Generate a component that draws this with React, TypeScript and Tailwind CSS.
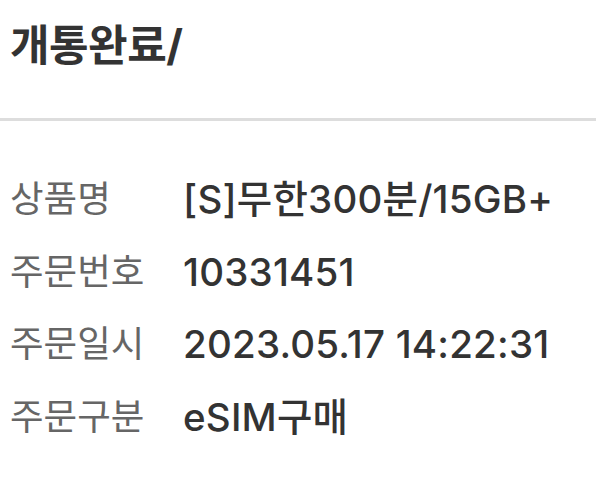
import React from "react";

const rows: [string, string][] = [
  ["상품명", "[S]무한300분/15GB+"],
  ["주문번호", "10331451"],
  ["주문일시", "2023.05.17 14:22:31"],
  ["주문구분", "eSIM구매"],
];

export default function App() {
  return (
    <div
      className="w-[596px] h-[499px] bg-white overflow-hidden"
      style={{ fontFamily: 'Inter, "Noto Sans CJK KR", sans-serif' }}
    >
      <div className="h-[118px] pt-[21px] px-[10px]">
        <div className="text-[43px] leading-[48px] font-bold text-[#333333] tracking-[-0.5px]">
          개통완료/
        </div>
      </div>
      <div className="h-[3px] bg-[#dddddd]" />
      <div className="pt-[42px] px-[10px]">
        {rows.map(([k, v]) => (
          <div key={k} className="flex items-center h-[72.5px]">
            <div className="w-[173px] shrink-0 text-[36.5px] leading-[48px] text-[#666666] font-normal">{k}</div>
            <div className="text-[38.5px] leading-[48px] text-[#333333] font-medium whitespace-nowrap tracking-[0.2px]">{v}</div>
          </div>
        ))}
      </div>
    </div>
  );
}
